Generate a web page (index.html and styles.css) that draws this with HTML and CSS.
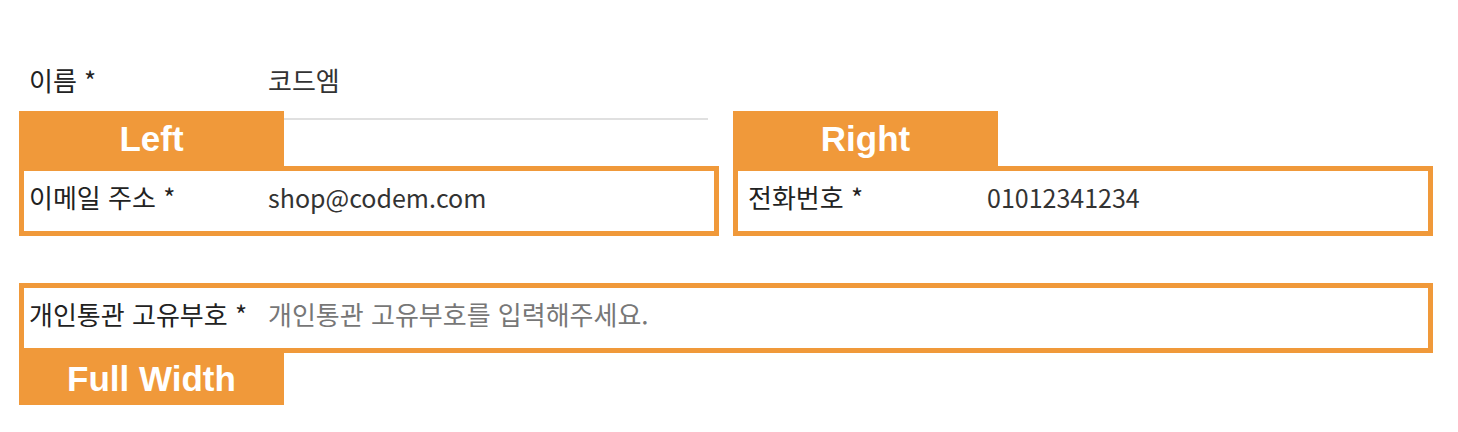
FILE: index.html
```html
<!DOCTYPE html>
<html lang="ko">
    <head>
        <meta charset="utf-8">
        <title>주문자 정보</title>
        <link rel="stylesheet" href="styles.css">
    </head>
    <body>
        <form class="orderForm">

            <!-- 이름 -->
            <div class="nameRow">
                <label class="fieldLabel">이름 *</label>
                <div class="nameInput">코드엠</div>
            </div>

            <!-- Left / Right columns -->
            <div class="columns">
                <div class="fieldBox">
                    <span class="tag tagTop">Left</span>
                    <label class="fieldLabel">이메일 주소 *</label>
                    <div class="fieldValue latin">shop@codem.com</div>
                </div>
                <div class="fieldBox boxRight">
                    <span class="tag tagTop">Right</span>
                    <label class="fieldLabel">전화번호 *</label>
                    <div class="fieldValue latin">01012341234</div>
                </div>
            </div>

            <!-- Full width -->
            <div class="fieldBox boxFull">
                <label class="fieldLabel">개인통관 고유부호 *</label>
                <div class="fieldValue placeholder">개인통관 고유부호를 입력해주세요.</div>
            </div>
            <div class="tag tagBottom">Full Width</div>

        </form>
    </body>
</html>
```

FILE: styles.css
```css
body {
    margin: 0;
    min-height: 432px;
    background-color: #fff;
    font-family: "Noto Sans CJK KR", "Noto Sans", sans-serif;
    font-size: 26px;
    color: #222;
}

.orderForm {
    width: 1414px;
    padding: 54px 0 0 19px;
}

/* name row */
.nameRow {
    display: flex;
    width: 679px;
    padding-left: 10px;
}

.fieldLabel {
    width: 239px;
    flex-shrink: 0;
    line-height: 32px;
    padding-top: 10px;
    white-space: nowrap;
}

.nameInput {
    flex: 1;
    line-height: 32px;
    padding: 10px 0 22px 0;
    color: #333;
    border-bottom: 2px solid #e0e0e0;
}

/* boxes */
.columns {
    display: grid;
    grid-template-columns: 700px 700px;
    gap: 14px;
    margin-top: 46px;
}

.fieldBox {
    position: relative;
    display: flex;
    height: 60px;
    padding-left: 5px;
    border: 5px solid #f0993a;
}

.boxRight {
    padding-left: 10px;
}

.boxFull {
    margin-top: 47px;
}

.fieldValue {
    line-height: 32px;
    padding-top: 10px;
    color: #333;
    white-space: nowrap;
}

.latin {
    font-size: 25px;
}

.placeholder {
    color: #777;
}

/* orange labels */
.tag {
    width: 265px;
    display: flex;
    align-items: center;
    justify-content: center;
    background-color: #f0993a;
    color: #fff;
    font-family: "Liberation Sans", Arial, sans-serif;
    font-weight: bold;
    font-size: 35px;
}

.tagTop {
    position: absolute;
    left: -5px;
    bottom: calc(100% + 5px);
    height: 55px;
}

.tagBottom {
    height: 52px;
}
```
